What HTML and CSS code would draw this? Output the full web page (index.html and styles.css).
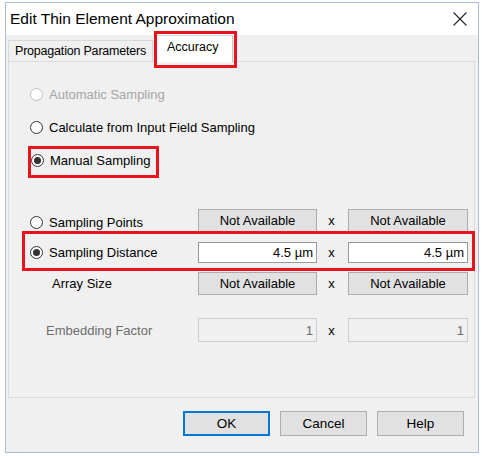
FILE: index.html
```html
<!DOCTYPE html>
<html>
<head>
    <title>Edit Thin Element Approximation</title>
    <meta charset="UTF-8">
    <link rel="stylesheet" href="styles.css">
</head>
<body>
    <div class="window">
        <div class="titlebar">
            <span class="title">Edit Thin Element Approximation</span>
            <svg class="close" width="14" height="14" viewBox="0 0 14 14">
                <path d="M0.5 0.5 L13.5 13.5 M13.5 0.5 L0.5 13.5" stroke="#222" stroke-width="1.1" fill="none"/>
            </svg>
        </div>

        <div class="tabs">
            <div class="tab">Propagation Parameters</div>
            <div class="tab active">Accuracy</div>
        </div>

        <div class="panel">
            <div class="radio-row disabled"><span class="radio"></span>Automatic Sampling</div>
            <div class="radio-row"><span class="radio"></span>Calculate from Input Field Sampling</div>
            <div class="radio-row manual"><span class="radio checked"></span>Manual Sampling</div>

            <div class="field-row points">
                <div class="radio-row"><span class="radio"></span>Sampling Points</div>
                <div class="box na">Not Available</div>
                <span class="times">x</span>
                <div class="box na">Not Available</div>
            </div>

            <div class="field-row distance">
                <div class="radio-row"><span class="radio checked"></span>Sampling Distance</div>
                <div class="box input">4.5 µm</div>
                <span class="times">x</span>
                <div class="box input">4.5 µm</div>
            </div>

            <div class="field-row array">
                <div class="label array-label">Array Size</div>
                <div class="box na">Not Available</div>
                <span class="times">x</span>
                <div class="box na">Not Available</div>
            </div>

            <div class="field-row embed">
                <div class="label embed-label">Embedding Factor</div>
                <div class="box input off">1</div>
                <span class="times">x</span>
                <div class="box input off">1</div>
            </div>
        </div>

        <div class="buttons">
            <button class="btn default">OK</button>
            <button class="btn">Cancel</button>
            <button class="btn">Help</button>
        </div>
    </div>
</body>
</html>
```

FILE: styles.css
```css
* {
    box-sizing: border-box;
}

body {
    margin: 0;
    background-color: #FFFFFF;
    font-family: "Liberation Sans", Arial, sans-serif;
    font-size: 13px;
    color: #000000;
}

.window {
    margin: 2px 3px 0 5px;
    height: 451px;
    border: 1px solid #A7BDD9;
    background-color: #F0F0F0;
}

.titlebar {
    height: 32px;
    background-color: #FFFFFF;
    display: flex;
    align-items: center;
    justify-content: space-between;
    padding: 0 11px 0 4px;
}

.title {
    font-size: 15.5px;
}

.tabs {
    height: 26px;
    display: flex;
    align-items: flex-end;
    padding-left: 2px;
}

.tab {
    height: 21px;
    padding: 3px 0 0 6px;
    width: 145px;
    border: 1px solid #D9D9D9;
    border-bottom: none;
    background-color: #F0F0F0;
    font-size: 12.5px;
    letter-spacing: -0.2px;
    white-space: nowrap;
}

.tab.active {
    position: relative;
    z-index: 1;
    height: 27px;
    width: 78px;
    margin-left: 2px;
    margin-bottom: -1px;
    padding: 4px 0 0 11px;
    background-color: #FFFFFF;
    border-right-color: #C8C8C8;
    letter-spacing: 0;
}

/* red annotation box */
.tab.active::after {
    content: "";
    position: absolute;
    left: -2px;
    right: -5px;
    top: -5px;
    bottom: -6px;
    border: 3px solid #E8141B;
}

.panel {
    height: 337px;
    margin: 0 3px 0 2px;
    padding: 22px 0 0 16px;
    border: 1px solid #DCDCDC;
    background-color: #F0F0F0;
}

.radio-row {
    display: flex;
    align-items: center;
    height: 20px;
    padding-left: 5px;
    white-space: nowrap;
}

.radio-row + .radio-row {
    margin-top: 13px;
}

.radio {
    display: inline-flex;
    align-items: center;
    justify-content: center;
    width: 13px;
    height: 13px;
    margin-right: 6px;
    border: 1px solid #333333;
    border-radius: 50%;
    background-color: #FFFFFF;
}

.radio.checked::after {
    content: "";
    width: 7px;
    height: 7px;
    border-radius: 50%;
    background-color: #333333;
}

.disabled {
    color: #A6A6A6;
}

.disabled .radio {
    border-color: #BFBFBF;
}

.radio-row.manual {
    width: 125px;
    height: 26px;
    margin-top: 12px;
    margin-left: 6px;
    padding: 0 0 4px 0;
    outline: 3px solid #E8141B;
}

.field-row {
    display: grid;
    grid-template-columns: 168px 119px 31px 120px;
    align-items: center;
    width: 447px;
    padding-left: 5px;
}

.field-row .radio-row {
    padding-left: 0;
}

.field-row.points {
    margin-top: 34px;
    height: 23px;
}

.field-row.points .radio-row {
    padding-top: 3px;
}

.field-row.distance {
    margin-top: 2px;
    height: 34px;
    padding-top: 3px;
    outline: 3px solid #E8141B;
}

.field-row.array {
    margin-top: 4px;
    height: 23px;
}

.field-row.embed {
    margin-top: 23px;
    height: 24px;
}

.label {
    white-space: nowrap;
}

.array-label {
    padding-left: 22px;
}

.embed-label {
    padding-left: 16px;
    color: #6D6D6D;
}

.times {
    text-align: center;
    padding-right: 2px;
}

.box {
    height: 23px;
    display: flex;
    align-items: center;
    white-space: nowrap;
}

.box.na {
    justify-content: center;
    background-color: #E1E1E1;
    border: 1px solid #ADADAD;
}

.box.input {
    height: 21px;
    justify-content: flex-end;
    padding-right: 3px;
    background-color: #FFFFFF;
    border: 1px solid #9A9A9A;
}

.box.input.off {
    height: 24px;
    background-color: #F0F0F0;
    border-color: #CCCCCC;
    color: #6D6D6D;
}

.buttons {
    display: flex;
    justify-content: flex-end;
    gap: 10px;
    margin-top: 13px;
    padding-right: 14px;
}

.btn {
    width: 87px;
    height: 25px;
    font-family: "Liberation Sans", Arial, sans-serif;
    font-size: 13.5px;
    color: #000000;
    background-color: #E1E1E1;
    border: 1px solid #ADADAD;
    padding: 0;
}

.btn.default {
    border: 2px solid #0078D7;
}
```
